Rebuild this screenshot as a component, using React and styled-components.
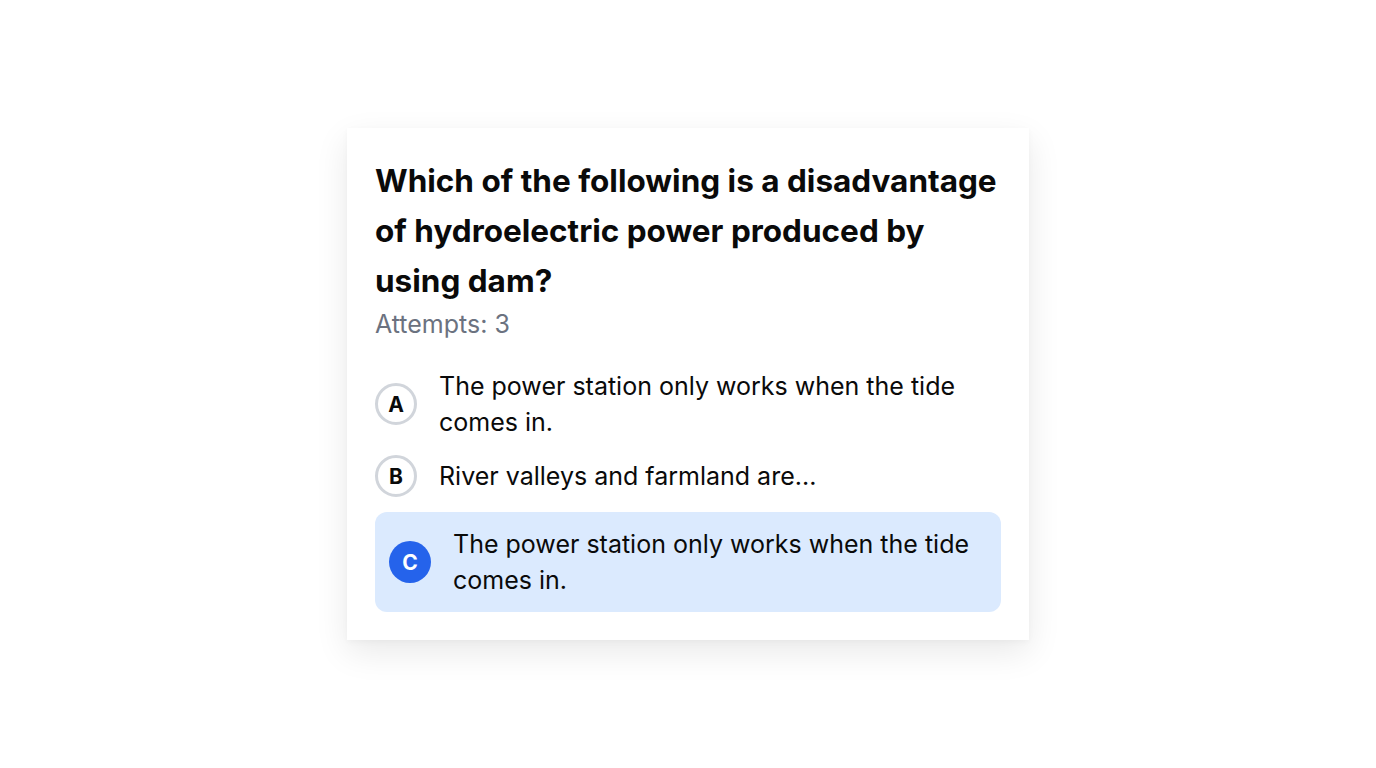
import React from "react";
import styled, { createGlobalStyle } from "styled-components";

const Global = createGlobalStyle`
  html, body { margin: 0; padding: 0; background: #ffffff; }
  body { font-family: Inter, "Noto Sans", sans-serif; color: #0a0a0a; }
  * { box-sizing: border-box; }
`;

const Page = styled.div`
  width: 100vw;
  height: 100vh;
  display: flex;
  align-items: center;
  justify-content: center;
`;

const Card = styled.div`
  width: 682px;
  padding: 28px;
  background: #ffffff;
  box-shadow: 0 12px 32px rgba(0, 0, 0, 0.09), 0 2px 6px rgba(0, 0, 0, 0.03);
  display: flex;
  flex-direction: column;
`;

const Question = styled.h2`
  margin: 0;
  font-size: 31.5px;
  line-height: 50px;
  font-weight: 700;
  color: #0a0a0a;
`;

const Attempts = styled.div`
  font-size: 25px;
  line-height: 36px;
  color: #6b7280;
`;

const Options = styled.div`
  margin-top: 26px;
  display: flex;
  flex-direction: column;
  gap: 15px;
`;

const Option = styled.div`
  display: flex;
  align-items: center;
  gap: 22px;
  padding: ${(p) => (p.$selected ? "14px" : "0")};
  border-radius: 12px;
  background: ${(p) => (p.$selected ? "#dbeafe" : "transparent")};
`;

const Badge = styled.div`
  flex: none;
  width: 42px;
  height: 42px;
  border-radius: 50%;
  display: flex;
  align-items: center;
  justify-content: center;
  font-size: 21px;
  font-weight: 700;
  border: ${(p) => (p.$selected ? "none" : "3px solid #d1d5db")};
  background: ${(p) => (p.$selected ? "#2563eb" : "#ffffff")};
  color: ${(p) => (p.$selected ? "#ffffff" : "#0a0a0a")};
`;

const OptionText = styled.div`
  font-size: 25px;
  line-height: 36px;
  color: #0a0a0a;
`;

const options = [
  { key: "A", text: "The power station only works when the tide comes in." },
  { key: "B", text: "River valleys and farmland are..." },
  { key: "C", text: "The power station only works when the tide comes in.", selected: true },
];

export default function App() {
  return (
    <>
      <Global />
      <Page>
        <Card>
          <Question>
            Which of the following is a disadvantage of hydroelectric power produced by using dam?
          </Question>
          <Attempts>Attempts: 3</Attempts>
          <Options>
            {options.map((o) => (
              <Option key={o.key} $selected={o.selected}>
                <Badge $selected={o.selected}>{o.key}</Badge>
                <OptionText>{o.text}</OptionText>
              </Option>
            ))}
          </Options>
        </Card>
      </Page>
    </>
  );
}
